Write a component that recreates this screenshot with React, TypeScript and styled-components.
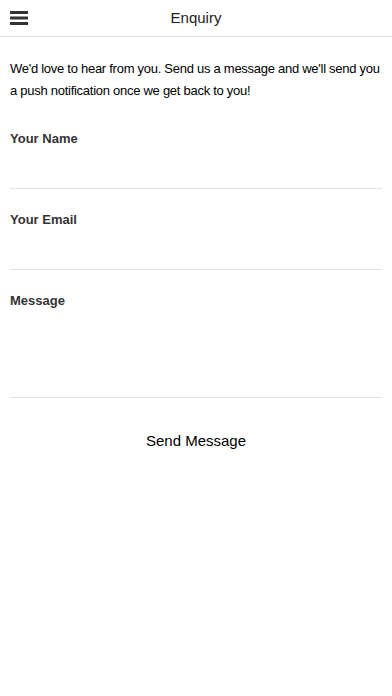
import React from 'react';
import styled, { createGlobalStyle } from 'styled-components';

const GlobalStyle = createGlobalStyle`
  html, body {
    margin: 0;
    padding: 0;
    background: #ffffff;
    font-family: "Liberation Sans", Arial, sans-serif;
  }
`;

const fields = [
  { label: 'Your Name', height: 41, first: true },
  { label: 'Your Email', height: 41, first: false },
  { label: 'Message', height: 88, first: false },
];

const App: React.FC = () => {
  return (
    <>
      <GlobalStyle />
      <Page>
        <Header>
          <MenuButton aria-label="Menu">
            <svg width="18" height="14" viewBox="0 0 18 14">
              <rect x="0" y="0" width="18" height="3" fill="#333" />
              <rect x="0" y="5.5" width="18" height="3" fill="#333" />
              <rect x="0" y="11" width="18" height="3" fill="#333" />
            </svg>
          </MenuButton>
          <Title>Enquiry</Title>
        </Header>
        <Content>
          <Intro>
            We'd love to hear from you. Send us a message and we'll send you a push notification once we get
            back to you!
          </Intro>
          {fields.map((f) => (
            <Field key={f.label} first={f.first}>
              <Label>{f.label}</Label>
              <InputArea fieldHeight={f.height} />
            </Field>
          ))}
          <SendButton>Send Message</SendButton>
        </Content>
      </Page>
    </>
  );
};

const Page = styled.div`
  width: 392px;
  min-height: 696px;
  background: #fff;
`;

const Header = styled.div`
  position: relative;
  height: 37px;
  border-bottom: 1px solid #e2e2e2;
  display: flex;
  align-items: center;
  justify-content: center;
  box-sizing: border-box;
  padding-bottom: 2px;
`;

const MenuButton = styled.div`
  position: absolute;
  left: 10px;
  top: 11px;
  width: 18px;
  height: 14px;
  display: flex;
`;

const Title = styled.div`
  font-size: 15px;
  color: #222;
`;

const Content = styled.div`
  padding: 0 10px;
`;

const Intro = styled.p`
  margin: 21px 0 0;
  font-size: 13px;
  letter-spacing: -0.27px;
  line-height: 22px;
  color: #000;
`;

const Field = styled.div<{ first: boolean }>`
  display: flex;
  flex-direction: column;
  border-bottom: 1px solid #e2e2e2;
  padding-top: ${(p) => (p.first ? 28 : 22)}px;
`;

const Label = styled.div`
  font-size: 13px;
  font-weight: bold;
  color: #333;
  line-height: 17px;
`;

const InputArea = styled.div<{ fieldHeight: number }>`
  height: ${(p) => p.fieldHeight}px;
`;

const SendButton = styled.div`
  margin-top: 34px;
  text-align: center;
  font-size: 15px;
  line-height: 17px;
  color: #000;
`;

export default App;
